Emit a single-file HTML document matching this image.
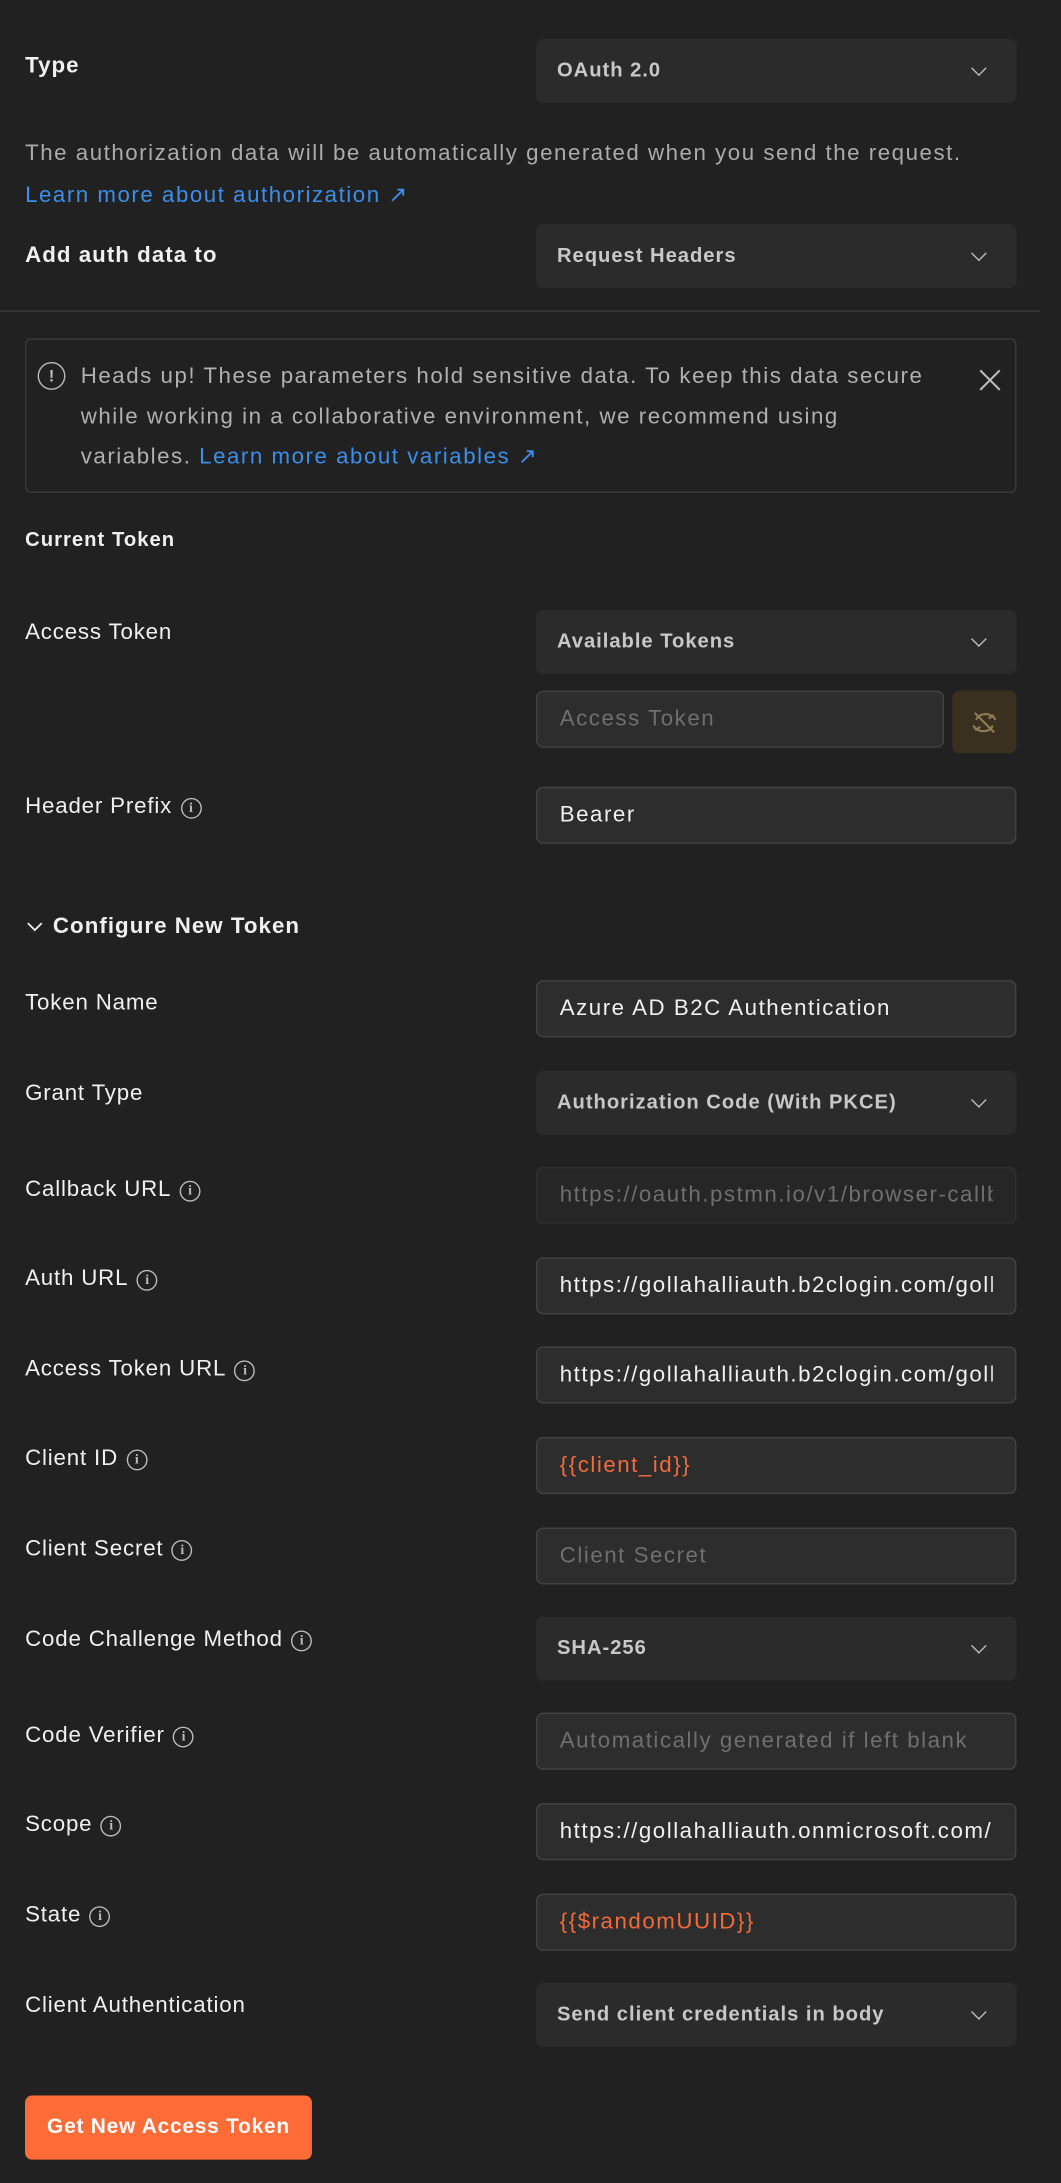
<!DOCTYPE html>
<html><head><meta charset="utf-8">
<style>
html,body{margin:0;padding:0;background:#212121;width:1061px;height:2182px;overflow:hidden}
#w{position:absolute;left:0;top:0;width:762px;height:1568px;transform:scale(1.3924);transform-origin:0 0;font-family:"Liberation Sans",sans-serif;color:#f0f0f0;letter-spacing:1.1px}
.a{position:absolute}
.lbl{position:absolute;left:18px;font-size:16px;color:#f0f0f0;transform:translateY(-50%);white-space:nowrap;display:flex;align-items:center;letter-spacing:0.6px}
.b{font-weight:bold;letter-spacing:0.75px}
.dd{position:absolute;left:385px;width:345px;height:46px;background:#2b2b2b;border-radius:5px;box-sizing:border-box;padding-left:15px;font-size:14.5px;font-weight:bold;color:#c8c8c8;line-height:46px;letter-spacing:0.7px}
.dd::after{content:"";position:absolute;right:23px;top:17px;width:7px;height:7px;border-right:1.3px solid #bbb;border-bottom:1.3px solid #bbb;transform:rotate(45deg)}
.in{position:absolute;left:385px;width:345px;height:41px;background:#2d2d2d;border:1px solid #444;border-radius:5px;box-sizing:border-box;padding:0 16px;font-size:16px;line-height:39px;color:#f0f0f0;white-space:nowrap;overflow:hidden}
.in span.c{display:block;overflow:hidden}
.ph{color:#6f6f6f}
.or{color:#f26b3a}
.dis{background:#262626;border-color:#2f2f2f;color:#6f6f6f}
.i{display:inline-block;width:13px;height:13px;border:1.3px solid #bbb;border-radius:50%;margin-left:6px;font-size:10px;line-height:13px;text-align:center;color:#bbb;font-weight:bold;font-family:"Liberation Serif",serif;letter-spacing:0}
</style></head><body><div id="w">
<div class="lbl b" style="top:48px">Type</div>
<div class="dd" style="top:28px">OAuth 2.0</div>
<div class="a" style="left:18px;top:102px;font-size:16px;color:#ababab;white-space:nowrap">The authorization data will be automatically generated when you send the request.</div>
<div class="a" style="left:18px;top:130px;font-size:16px;color:#3b8eea">Learn more about authorization ↗</div>
<div class="lbl b" style="top:184px">Add auth data to</div>
<div class="dd" style="top:161px">Request Headers</div>
<div class="a" style="left:0;top:223px;width:747px;height:1px;background:#3a3a3a"></div>
<div class="a" style="left:18px;top:243px;width:712px;height:111px;border:1px solid #3a3a3a;border-radius:4px;box-sizing:border-box"></div>
<div class="a" style="left:27px;top:260px;width:20px;height:20px;border:1.4px solid #bbb;border-radius:50%;box-sizing:border-box;text-align:center;font-size:12px;line-height:18px;color:#bbb;font-weight:bold;letter-spacing:0">!</div>
<div class="a" style="left:58px;top:256px;width:660px;font-size:16px;line-height:29px;color:#b0b0b0;white-space:nowrap">Heads up! These parameters hold sensitive data. To keep this data secure<br>while working in a collaborative environment, we recommend using<br>variables. <span style="color:#3b8eea">Learn more about variables ↗</span></div>
<svg class="a" style="left:702px;top:264px" width="18" height="18" viewBox="0 0 18 18"><path d="M2 2L16 16M16 2L2 16" stroke="#bbb" stroke-width="1.5"/></svg>
<div class="lbl b" style="top:388px;font-size:14.5px">Current Token</div>
<div class="lbl" style="top:455px">Access Token</div>
<div class="dd" style="top:438px">Available Tokens</div>
<div class="in" style="top:496px;width:293px"><span class="ph">Access Token</span></div>
<div class="a" style="left:684px;top:496px;width:46px;height:45px;background:#3a3020;border-radius:5px"></div>
<svg class="a" style="left:695px;top:507px" width="24" height="24" viewBox="0 0 24 24" fill="none" stroke="#8f7e55" stroke-width="1.5"><path d="M6 10a7 6 0 0 1 12-2M18 14a7 6 0 0 1-12 2M4 14l2 3 3-2M20 10l-2-3-3 2M5 5l14 14"/></svg>
<div class="lbl" style="top:580px">Header Prefix<span class="i">i</span></div>
<div class="in" style="top:565px">Bearer</div>
<svg class="a" style="left:19px;top:661px" width="12" height="10" viewBox="0 0 12 10"><path d="M1 2l5 5 5-5" stroke="#eee" stroke-width="1.3" fill="none"/></svg>
<div class="lbl b" style="top:666px;left:38px">Configure New Token</div>
<div class="lbl" style="top:721px">Token Name</div>
<div class="in" style="top:704px"><span class="c">Azure AD B2C Authentication</span></div>
<div class="lbl" style="top:786px">Grant Type</div>
<div class="dd" style="top:769px">Authorization Code (With PKCE)</div>
<div class="lbl" style="top:855px">Callback URL<span class="i">i</span></div>
<div class="in dis" style="top:838px"><span class="c">https://oauth.pstmn.io/v1/browser-callback</span></div>
<div class="lbl" style="top:919px">Auth URL<span class="i">i</span></div>
<div class="in" style="top:903px"><span class="c">https://gollahalliauth.b2clogin.com/gollahalliauth</span></div>
<div class="lbl" style="top:984px">Access Token URL<span class="i">i</span></div>
<div class="in" style="top:967px"><span class="c">https://gollahalliauth.b2clogin.com/gollahalliauth</span></div>
<div class="lbl" style="top:1048px">Client ID<span class="i">i</span></div>
<div class="in or" style="top:1032px">{{client_id}}</div>
<div class="lbl" style="top:1113px">Client Secret<span class="i">i</span></div>
<div class="in" style="top:1097px"><span class="ph">Client Secret</span></div>
<div class="lbl" style="top:1178px">Code Challenge Method<span class="i">i</span></div>
<div class="dd" style="top:1161px">SHA-256</div>
<div class="lbl" style="top:1247px">Code Verifier<span class="i">i</span></div>
<div class="in" style="top:1230px"><span class="c ph">Automatically generated if left blank</span></div>
<div class="lbl" style="top:1311px">Scope<span class="i">i</span></div>
<div class="in" style="top:1295px"><span class="c">https://gollahalliauth.onmicrosoft.com/api</span></div>
<div class="lbl" style="top:1376px">State<span class="i">i</span></div>
<div class="in or" style="top:1360px">{{$randomUUID}}</div>
<div class="lbl" style="top:1441px">Client Authentication</div>
<div class="dd" style="top:1424px">Send client credentials in body</div>
<div class="a" style="left:18px;top:1505px;width:206px;height:46px;background:#ff6c37;border-radius:5px;color:#fff;font-weight:bold;font-size:15px;line-height:46px;text-align:center;letter-spacing:0.55px">Get New Access Token</div>
</div></body></html>
